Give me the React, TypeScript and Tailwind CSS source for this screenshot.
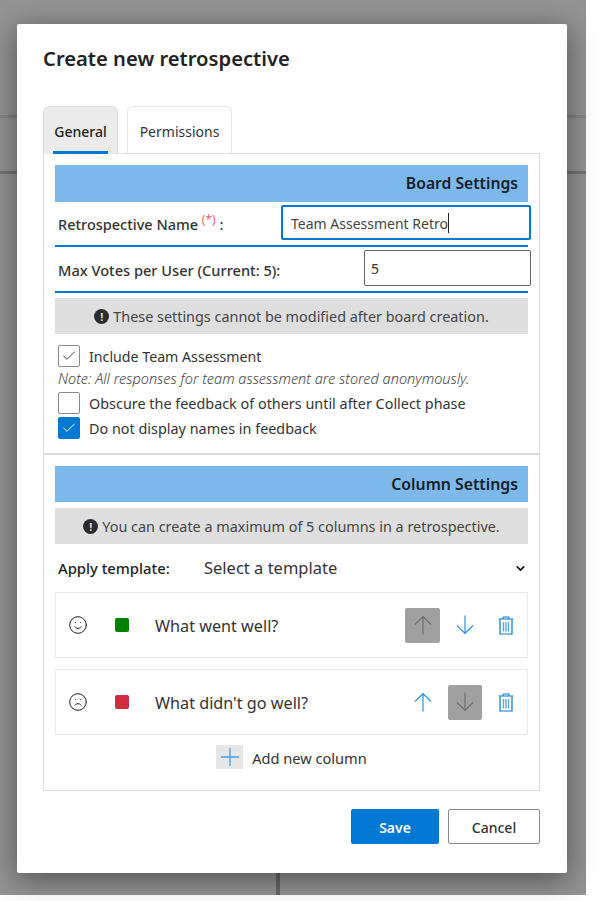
import React from 'react';
import { ChevronDown, Check, Frown, Smile } from 'lucide-react';

function Notice({ text }: { text: string }) {
  return (
    <div className="flex h-[36px] items-center justify-center gap-1 bg-[#dedede] text-[14.4px] text-[#444]">
      <span className="flex h-[15px] w-[15px] items-center justify-center rounded-full bg-[#2b2b2b] text-[11px] font-bold leading-none text-[#dedede]">!</span>
      <span className="pt-[1px]">{text}</span>
    </div>
  );
}

function Box({ checked, solid }: { checked?: boolean; solid?: boolean }) {
  return (
    <span className={`flex h-[22px] w-[22px] shrink-0 items-center justify-center rounded-[2px] border ${solid ? 'border-[#0078d4] bg-[#0078d4] text-white' : 'border-[#8a8a8a] bg-white text-[#444]'}`}>
      {checked && <Check className="h-[16px] w-[16px]" strokeWidth={1.5} />}
    </span>
  );
}

function Arrow({ down }: { down?: boolean }) {
  return (
    <svg viewBox="0 0 18 20" className={`h-[20px] w-[18px] ${down ? 'rotate-180' : ''}`} fill="none" stroke="currentColor" strokeWidth="1.2">
      <path d="M9 1.5V19.5M1 9.5L9 1.5L17 9.5" />
    </svg>
  );
}

function Trash() {
  return (
    <svg viewBox="0 0 16 19" className="h-[19px] w-[16px] text-[#0078d4]" fill="none" stroke="currentColor" strokeWidth="1">
      <path d="M0.5 3H15.5M5 3V1H11V3" />
      <path d="M2 3.5V18H14V3.5" strokeWidth="1.2" />
      <path d="M5.5 6V15.5M8 6V15.5M10.5 6V15.5" stroke="#5aa7e4" strokeWidth="1.4" />
    </svg>
  );
}

function ColumnRow({ title, color, sad, upOff, downOff }: { title: string; color: string; sad?: boolean; upOff?: boolean; downOff?: boolean }) {
  const Face = sad ? Frown : Smile;
  return (
    <div className="flex h-[66px] items-center border border-[#e8e8e8] pl-[12px] pr-[13px]">
      <Face className="h-[20px] w-[20px] text-[#222]" strokeWidth={1.2} />
      <span className="ml-[27px] h-[14px] w-[14px] rounded-[2px]" style={{ backgroundColor: color }} />
      <span className="ml-[26px] flex-1 pt-[2px] text-[16.2px] text-[#333]">{title}</span>
      <div className="flex items-center">
        <span className={`flex h-[35px] w-[35px] items-center justify-center rounded-[2px] ${upOff ? 'bg-[#a0a0a0] text-[#6e6e6e]' : 'text-[#2b90e6]'}`}>
          <Arrow />
        </span>
        <span className={`ml-[8px] flex h-[35px] w-[34px] items-center justify-center rounded-[2px] ${downOff ? 'bg-[#a0a0a0] text-[#6e6e6e]' : 'text-[#2b90e6]'}`}>
          <Arrow down />
        </span>
        <span className="ml-[16px]"><Trash /></span>
      </div>
    </div>
  );
}

export default function App() {
  return (
    <div className="relative h-[901px] w-[605px] overflow-hidden bg-white font-['Noto_Sans',sans-serif] text-[#333]">
      {/* Dimmed page behind the dialog */}
      <div className="absolute left-0 top-0 h-[895px] w-[586px] bg-[#929292]">
        <div className="absolute left-0 top-[115px] h-[3px] w-full bg-[#000]/10" />
        <div className="absolute left-0 top-[171px] h-[3px] w-full bg-[#000]/20" />
        <div className="absolute bottom-0 left-[276px] top-[872px] w-[4px] bg-[#000]/30" />
      </div>

      {/* Dialog */}
      <div className="absolute left-[17px] top-[24px] flex h-[849px] w-[550px] flex-col rounded-[2px] bg-white pl-[26px] pr-[27px] shadow-[0_6px_28px_rgba(0,0,0,0.45)]">
        <h1 className="mt-[18px] text-[20.2px] font-semibold leading-[33px] text-[#222]">Create new retrospective</h1>

        {/* Tabs */}
        <div className="relative z-10 -mb-px mt-[31px] flex h-[48px] gap-[9px]">
          <div className="relative w-[75px] rounded-t-[6px] border border-b-0 border-[#dedede] bg-[#ebebeb] pt-[14px] text-center text-[14px] font-medium text-[#222]">
            General
            <span className="absolute bottom-0 left-[9px] h-[3px] w-[55px] bg-[#0078d4]" />
          </div>
          <div className="w-[105px] rounded-t-[6px] border border-b-0 border-[#e6e6e6] pt-[14px] text-center text-[14px] text-[#333]">Permissions</div>
        </div>

        {/* Settings panel */}
        <div className="flex h-[638px] flex-col border border-[#dcdcdc]">
          <div className="h-[299px] px-[11px] pt-[11px]">
            <div className="flex h-[37px] items-center justify-end bg-[#7cb8e9] pr-[10px] text-[15.7px] font-semibold text-[#16202b]">Board Settings</div>

            <div className="relative flex h-[45px] items-start border-b-2 border-[#0078d4]">
              <span className="ml-[3px] mt-[12px] text-[14.5px] font-medium text-[#333]">
                Retrospective Name <sup className="text-[12px] font-normal text-[#ff5a6e]">(*)</sup> :
              </span>
              <div className="absolute left-[226px] top-[3px] flex h-[35px] w-[250px] items-center rounded-[2px] border-2 border-[#0078d4] bg-white pl-[8px] pt-[1px] text-[14px] text-[#444]">
                Team Assessment Retro<span className="h-[20px] w-px bg-[#222]" />
              </div>
            </div>

            <div className="relative flex h-[46px] items-center border-b-2 border-[#0078d4]">
              <span className="ml-[3px] pt-[4px] text-[14.6px] font-medium text-[#333]">Max Votes per User (Current: 5):</span>
              <div className="absolute left-[309px] top-[3px] flex h-[36px] w-[167px] items-center rounded-[2px] border border-[#666] bg-white pl-[6px] pt-[1px] text-[14px] text-[#333]">5</div>
            </div>

            <div className="mt-[5px]"><Notice text="These settings cannot be modified after board creation." /></div>

            <div className="ml-[3px] mt-[11px] flex items-center gap-[9px] text-[14.2px]">
              <Box checked />
              <span className="pt-[2px] leading-[20px]">Include Team Assessment</span>
            </div>
            <p className="ml-[3px] mt-[1px] text-[14.5px] font-light italic leading-[21px] text-[#444]">Note: All responses for team assessment are stored anonymously.</p>
            <div className="ml-[3px] mt-[3px] flex items-center gap-[9px] text-[14.4px]">
              <Box />
              <span className="pt-[2px] leading-[20px]">Obscure the feedback of others until after Collect phase</span>
            </div>
            <div className="ml-[3px] mt-[3px] flex items-center gap-[9px] text-[14.4px]">
              <Box checked solid />
              <span className="pt-[2px] leading-[20px]">Do not display names in feedback</span>
            </div>
          </div>

          <div className="flex-1 border-t-2 border-[#dcdcdc] px-[11px] pt-[11px]">
            <div className="flex h-[36px] items-center justify-end bg-[#7cb8e9] pr-[10px] pt-[1px] text-[15.8px] font-semibold text-[#16202b]">Column Settings</div>
            <div className="mt-[6px]"><Notice text="You can create a maximum of 5 columns in a retrospective." /></div>

            <div className="mt-[9px] flex h-[30px] items-center pl-[3px] pr-[1px]">
              <span className="w-[146px] text-[14.8px] font-medium text-[#222]">Apply template:</span>
              <span className="flex-1 text-[16.5px] text-[#333]">Select a template</span>
              <ChevronDown className="h-[13px] w-[13px] text-[#111]" strokeWidth={3} />
            </div>

            <div className="mt-[9px] flex flex-col gap-[11px]">
              <ColumnRow title="What went well?" color="#008000" upOff />
              <ColumnRow title="What didn't go well?" color="#cf2a3e" sad downOff />
            </div>

            <div className="mt-[10px] flex items-center justify-center gap-[9px] text-[14.6px]">
              <span className="flex h-[24px] w-[27px] items-center justify-center bg-[#e6e6e6] text-[#4a9de0]">
                <svg viewBox="0 0 18 18" className="h-[18px] w-[18px]" fill="none" stroke="currentColor" strokeWidth="1.3">
                  <path d="M9 0V18M0 9H18" />
                </svg>
              </span>
              <span className="pt-[3px]">Add new column</span>
            </div>
          </div>
        </div>

        {/* Footer */}
        <div className="mt-[18px] flex justify-end gap-[9px]">
          <button className="h-[35px] w-[88px] rounded-[2px] bg-[#0078d4] pt-[1px] text-[14px] font-semibold text-white">Save</button>
          <button className="h-[35px] w-[92px] rounded-[2px] border border-[#8a8a8a] bg-white pt-[1px] text-[14px] font-medium text-[#333]">Cancel</button>
        </div>
      </div>
    </div>
  );
}
